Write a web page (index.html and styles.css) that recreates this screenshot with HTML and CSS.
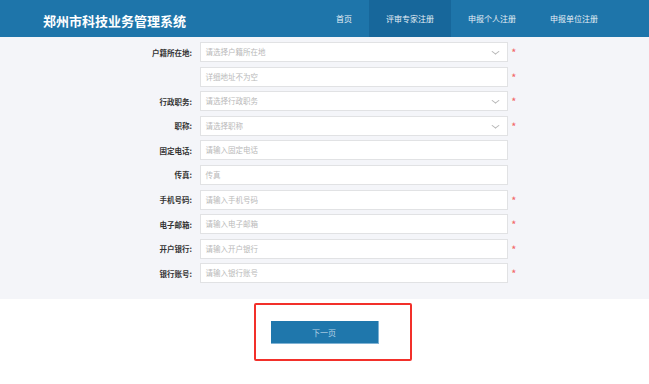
FILE: index.html
```html
<!DOCTYPE html>
<html lang="zh-CN">
<head>
    <meta charset="UTF-8">
    <meta name="viewport" content="width=device-width, initial-scale=1.0">
    <title>评审专家注册 - 郑州市科技业务管理系统</title>
    <link rel="stylesheet" href="styles.css">
</head>
<body>
    <header class="topbar">
        <div class="logo">郑州市科技业务管理系统</div>
        <nav class="nav">
            <a class="nav-item" href="#">首页</a>
            <a class="nav-item active" href="#">评审专家注册</a>
            <a class="nav-item" href="#">申报个人注册</a>
            <a class="nav-item" href="#">申报单位注册</a>
        </nav>
    </header>

    <section class="form-area">
        <div class="form-row">
            <label class="form-label">户籍所在地:</label>
            <div class="field select">请选择户籍所在地<span class="chevron"></span></div>
            <span class="star">*</span>
        </div>
        <div class="form-row">
            <label class="form-label"></label>
            <div class="field">详细地址不为空</div>
            <span class="star">*</span>
        </div>
        <div class="form-row">
            <label class="form-label">行政职务:</label>
            <div class="field select">请选择行政职务<span class="chevron"></span></div>
            <span class="star">*</span>
        </div>
        <div class="form-row">
            <label class="form-label">职称:</label>
            <div class="field select">请选择职称<span class="chevron"></span></div>
            <span class="star">*</span>
        </div>
        <div class="form-row">
            <label class="form-label">固定电话:</label>
            <div class="field">请输入固定电话</div>
        </div>
        <div class="form-row">
            <label class="form-label">传真:</label>
            <div class="field">传真</div>
        </div>
        <div class="form-row">
            <label class="form-label">手机号码:</label>
            <div class="field">请输入手机号码</div>
            <span class="star">*</span>
        </div>
        <div class="form-row">
            <label class="form-label">电子邮箱:</label>
            <div class="field">请输入电子邮箱</div>
            <span class="star">*</span>
        </div>
        <div class="form-row">
            <label class="form-label">开户银行:</label>
            <div class="field">请输入开户银行</div>
            <span class="star">*</span>
        </div>
        <div class="form-row">
            <label class="form-label">银行账号:</label>
            <div class="field">请输入银行账号</div>
            <span class="star">*</span>
        </div>
    </section>

    <div class="actions">
        <button class="next-btn">下一页</button>
        <div class="highlight"></div>
    </div>
</body>
</html>
```

FILE: styles.css
```css
body {
    margin: 0;
    font-family: "Noto Sans CJK SC", "Noto Sans", sans-serif;
    background: #fff;
    color: #333;
}
.topbar {
    height: 37px;
    background: #1e75aa;
    display: flex;
    align-items: stretch;
    justify-content: space-between;
    padding: 0 34px 0 43px;
}
.logo {
    color: #fff;
    font-size: 13px;
    font-weight: bold;
    line-height: 37px;
    padding-top: 2px;
}
.nav {
    display: flex;
}
.nav-item {
    display: block;
    padding: 0 17px;
    color: #e6eff6;
    font-size: 8px;
    line-height: 37px;
    text-decoration: none;
}
.nav-item.active {
    background: #17679b;
}
.form-area {
    background: #f4f5f9;
    padding: 5px 0 16px 112px;
    display: flex;
    flex-direction: column;
    gap: 4.6px;
}
.form-row {
    display: flex;
    align-items: center;
    height: 20px;
}
.form-label {
    width: 80px;
    text-align: right;
    font-size: 7.5px;
    font-weight: bold;
    color: #333;
    margin-right: 7.5px;
}
.field {
    width: 301px;
    height: 18px;
    border: 1px solid #e1e2e4;
    background: #fff;
    font-size: 7.5px;
    line-height: 18px;
    color: #b9b9b9;
    padding-left: 5px;
    position: relative;
}
.chevron {
    position: absolute;
    right: 9px;
    top: 6px;
    width: 4px;
    height: 4px;
    border-right: 1px solid #b5b5b5;
    border-bottom: 1px solid #b5b5b5;
    transform: rotate(45deg) skew(-8deg, -8deg);
}
.star {
    color: #f26b6b;
    font-size: 9px;
    font-weight: bold;
    margin-left: 4px;
    margin-top: 1px;
}
.actions {
    position: relative;
    display: flex;
    justify-content: center;
    padding-top: 22px;
    height: 70px;
}
.next-btn {
    width: 108px;
    height: 23px;
    background: #1f77ac;
    border: none;
    border-right: 1px solid #7fb2d4;
    border-bottom: 1px solid #7fb2d4;
    color: #b6d3e6;
    font-family: inherit;
    font-size: 8px;
    padding: 0;
}
.highlight {
    position: absolute;
    left: 254px;
    top: 4px;
    width: 154px;
    height: 54px;
    border: 2px solid #f2302a;
    border-radius: 2px;
}
```
